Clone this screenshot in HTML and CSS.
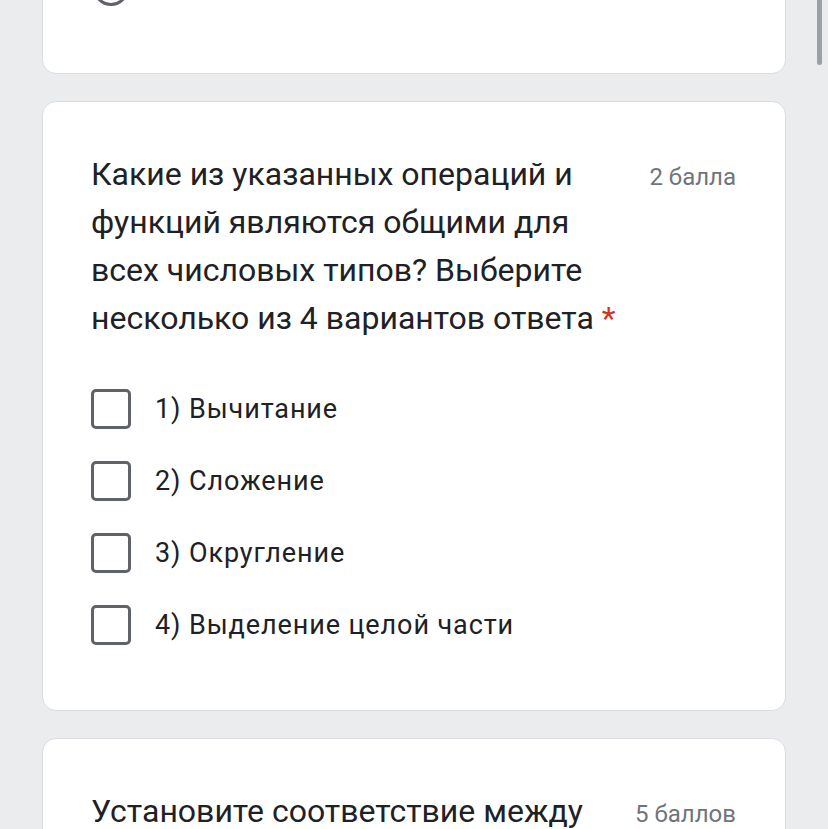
FILE: index.html
```html
<!DOCTYPE html>
<html>
<head>
  <title>Тест</title>
  <link rel="stylesheet" href="styles.css">
</head>
<body>
  <div class="form">
    <div class="card">
      <div class="option">
        <span class="radio"></span>
      </div>
    </div>

    <div class="card">
      <div class="question">
        <div class="title">Какие из указанных операций и функций являются общими для всех числовых типов? Выберите несколько из 4 вариантов ответа <span class="required">*</span></div>
        <div class="points">2 балла</div>
      </div>
      <div class="options">
        <label class="option"><span class="checkbox"></span><span class="label">1) Вычитание</span></label>
        <label class="option"><span class="checkbox"></span><span class="label">2) Сложение</span></label>
        <label class="option"><span class="checkbox"></span><span class="label">3) Округление</span></label>
        <label class="option"><span class="checkbox"></span><span class="label">4) Выделение целой части</span></label>
      </div>
    </div>

    <div class="card">
      <div class="question">
        <div class="title">Установите соответствие между</div>
        <div class="points">5 баллов</div>
      </div>
    </div>
  </div>

  <div class="scrollbar"></div>
</body>
</html>
```

FILE: styles.css
```css
html, body {
  height: 100%;
  overflow: hidden;
}

body {
  margin: 0;
  background-color: #ebecee;
  color: #202124;
  font-family: Roboto, "Noto Sans", sans-serif;
}

.form {
  display: flex;
  flex-direction: column;
  gap: 27px;
  padding: 0 42px;
  margin-top: -97px;
}

.card {
  background: #fff;
  border: 1px solid #dadce0;
  border-radius: 14px;
  padding: 48px 49px 49px 48px;
}

.question {
  display: flex;
  align-items: baseline;
  gap: 16px;
}

.title {
  flex: 1;
  font-size: 32px;
  line-height: 48px;
}

.required {
  color: #d93025;
}

.points {
  font-size: 24px;
  color: #70757a;
  white-space: nowrap;
}

.options {
  margin-top: 31px;
}

.option {
  display: flex;
  align-items: center;
  height: 72px;
}

.checkbox {
  box-sizing: border-box;
  width: 40px;
  height: 40px;
  border: 3.5px solid #5f6368;
  border-radius: 5px;
  flex-shrink: 0;
}

.radio {
  box-sizing: border-box;
  width: 36px;
  height: 36px;
  margin-left: 2px;
  border: 3.5px solid #5f6368;
  border-radius: 50%;
}

.label {
  margin-left: 24px;
  font-size: 27px;
  letter-spacing: 0.9px;
}

.scrollbar {
  position: fixed;
  top: 0;
  right: 6px;
  width: 5px;
  height: 65px;
  background: #9aa0a6;
  border-radius: 0 0 3px 3px;
}
```
